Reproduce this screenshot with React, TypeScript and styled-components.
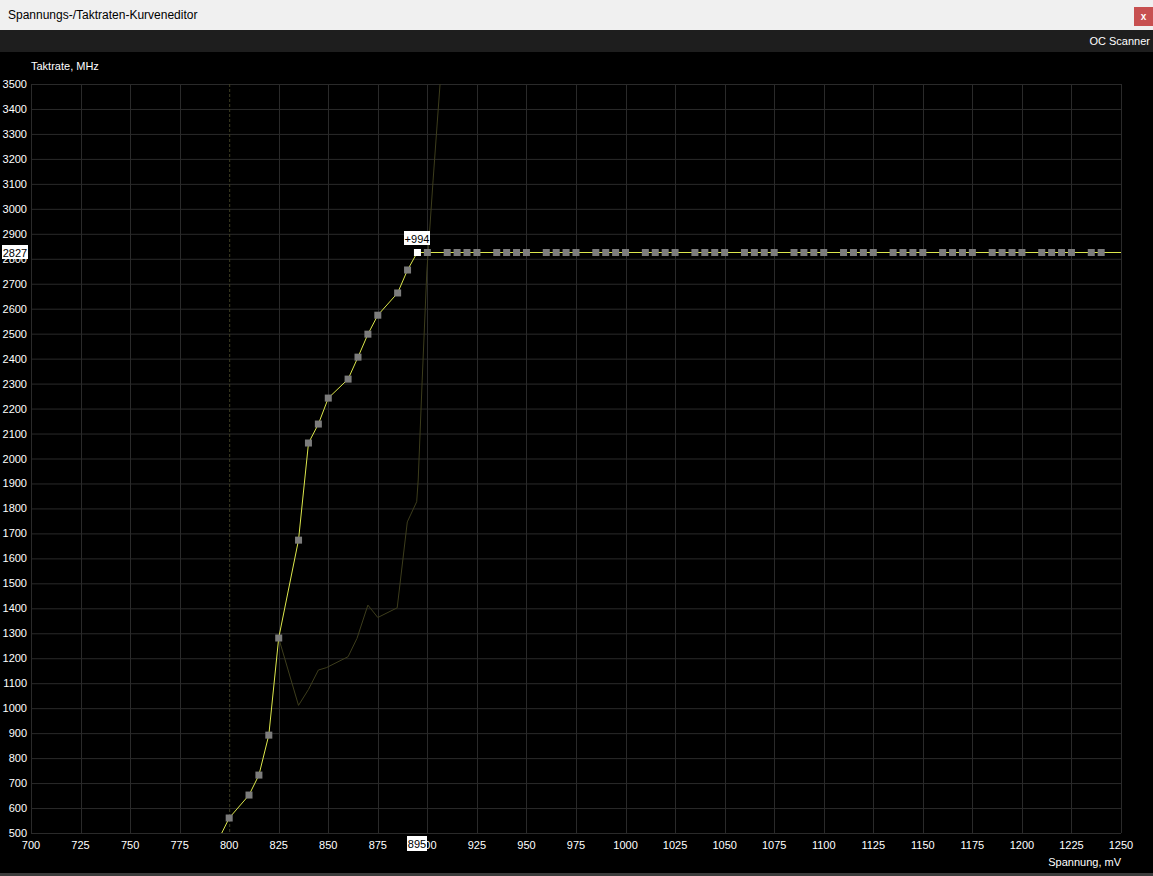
import React from 'react';
import styled, { createGlobalStyle } from 'styled-components';

const GlobalStyle = createGlobalStyle`
  html, body {
    margin: 0;
    padding: 0;
    background: #000;
  }
  body {
    font-family: 'Liberation Sans', Arial, sans-serif;
  }
`;

// plot geometry (chart-local coords)
const W = 1153;
const H = 821;
const X0 = 31;
const X1 = 1121;
const Y0 = 32;
const Y1 = 781;
const MV_MIN = 700;
const MV_MAX = 1250;
const MHZ_MIN = 500;
const MHZ_MAX = 3500;

const sx = (mv: number) => X0 + ((mv - MV_MIN) * (X1 - X0)) / (MV_MAX - MV_MIN);
const sy = (mhz: number) => Y1 - ((mhz - MHZ_MIN) * (Y1 - Y0)) / (MHZ_MAX - MHZ_MIN);

const SELECTED = { mv: 895, mhz: 2827 };

const curve: [number, number][] = [
  [795, 480],
  [800, 560],
  [810, 652],
  [815, 732],
  [820, 892],
  [825, 1281],
  [835, 1673],
  [840, 2062],
  [845, 2138],
  [850, 2242],
  [860, 2318],
  [865, 2406],
  [870, 2498],
  [875, 2574],
  [885, 2663],
  [890, 2755],
  [895, 2827],
];

// flat part: every 5 mV from 900 on, except the x05 steps after each 25
const flatSet: number[] = [];
for (let mv = 900; mv <= 1240; mv += 5) {
  if (mv % 25 !== 5) flatSet.push(mv);
}

const ghost: [number, number][] = [
  [825, 1281],
  [835, 1011],
  [840, 1075],
  [845, 1153],
  [849, 1162],
  [860, 1206],
  [864.5, 1280],
  [870, 1413],
  [875, 1363],
  [884.8, 1402],
  [889.9, 1746],
  [894.6, 1827],
  [895.4, 1914],
  [897.4, 2314],
  [899.7, 2747],
  [902.9, 3115],
  [906.4, 3498],
  [907, 3560],
];

const toPath = (pts: [number, number][]) =>
  pts.map(([mv, mhz], i) => `${i ? 'L' : 'M'}${sx(mv).toFixed(1)} ${sy(mhz).toFixed(1)}`).join(' ');

const yTicks = Array.from({ length: 31 }, (_, i) => 500 + i * 100);
const xTicks = Array.from({ length: 23 }, (_, i) => 700 + i * 25);

const App = () => {
  const selX = sx(SELECTED.mv);
  const selY = Math.round(sy(SELECTED.mhz));
  return (
    <>
      <GlobalStyle />
      <Window>
        <TitleBar>
          <Title>Spannungs-/Taktraten-Kurveneditor</Title>
          <CloseButton>x</CloseButton>
        </TitleBar>
        <Toolbar>
          <ToolbarButton>OC Scanner</ToolbarButton>
        </Toolbar>
        <ChartArea>
          <svg width={W} height={H} viewBox={`0 0 ${W} ${H}`}>
            <defs>
              <clipPath id="plot">
                <rect x={X0} y={Y0} width={X1 - X0} height={Y1 - Y0} />
              </clipPath>
            </defs>

            {yTicks.map((t) => (
              <GridLine key={`h${t}`} x1={X0} x2={X1} y1={sy(t) + 0.5} y2={sy(t) + 0.5} />
            ))}
            {xTicks.map((t) =>
              t === 800 ? (
                <MarkerLine key={`v${t}`} x1={sx(t) + 0.5} x2={sx(t) + 0.5} y1={Y0} y2={Y1} />
              ) : (
                <GridLine key={`v${t}`} x1={Math.round(sx(t)) + 0.5} x2={Math.round(sx(t)) + 0.5} y1={Y0} y2={Y1} />
              )
            )}

            <AxisTitle x={X0} y={18}>Taktrate, MHz</AxisTitle>
            {yTicks.map((t) => (
              <TickLabel key={`yl${t}`} x={27} y={sy(t) + 4} textAnchor="end">
                {t}
              </TickLabel>
            ))}
            {xTicks.map((t) => (
              <TickLabel key={`xl${t}`} x={sx(t)} y={797} textAnchor="middle">
                {t}
              </TickLabel>
            ))}
            <AxisTitle x={X1} y={814} textAnchor="end">Spannung, mV</AxisTitle>

            <g clipPath="url(#plot)">
              <GhostCurve d={toPath(ghost)} />
              <Curve d={toPath(curve)} />
              <Curve d={`M${selX} ${selY + 0.5} L${X1} ${selY + 0.5}`} />
              {curve.slice(1, -1).map(([mv, mhz]) => (
                <Point key={`p${mv}`} x={sx(mv) - 3.5} y={sy(mhz) - 3.5} width={7} height={7} />
              ))}
              {flatSet.map((mv) => (
                <Point key={`f${mv}`} x={sx(mv) - 3.5} y={selY - 3} width={7} height={7} />
              ))}
              <Point $active x={selX - 3.5} y={selY - 3} width={7} height={7} />
            </g>

            <TagBox x={2} y={193} width={26} height={14} />
            <TagText x={15} y={204.5} textAnchor="middle">2827</TagText>

            <TagBox x={404} y={179} width={26} height={14} />
            <TagText x={417} y={190.5} textAnchor="middle">+994</TagText>

            <TagBox x={407} y={784} width={20} height={15} />
            <TagText x={417} y={796} textAnchor="middle">895</TagText>
          </svg>
        </ChartArea>
      </Window>
    </>
  );
};

const Window = styled.div`
  width: 1153px;
  height: 876px;
  display: flex;
  flex-direction: column;
  background: #000;
  overflow: hidden;
`;

const TitleBar = styled.div`
  height: 30px;
  flex: none;
  display: flex;
  align-items: center;
  justify-content: space-between;
  padding-left: 8px;
  background: #f0f0f0;
`;

const Title = styled.span`
  font-size: 12px;
  color: #000;
`;

const CloseButton = styled.div`
  width: 19px;
  height: 19px;
  margin-top: 3px;
  display: flex;
  align-items: center;
  justify-content: center;
  background: #c75050;
  color: #fff;
  font-size: 10px;
  font-weight: bold;
`;

const Toolbar = styled.div`
  height: 22px;
  flex: none;
  display: flex;
  align-items: center;
  justify-content: flex-end;
  padding-right: 3px;
  background: #1e1e1e;
`;

const ToolbarButton = styled.span`
  font-size: 11px;
  color: #fff;
`;

const ChartArea = styled.div`
  height: 821px;
  flex: none;
  border-bottom: 3px solid #3c3c3c;

  svg {
    display: block;
  }
`;

const GridLine = styled.line`
  stroke: #2a2a2a;
  stroke-width: 1;
`;

const MarkerLine = styled.line`
  stroke: #3e3e22;
  stroke-width: 1;
  stroke-dasharray: 3 2;
`;

const TickLabel = styled.text`
  font-family: 'Liberation Sans', Arial, sans-serif;
  font-size: 11px;
  fill: #fff;
`;

const AxisTitle = styled.text`
  font-family: 'Liberation Sans', Arial, sans-serif;
  font-size: 11px;
  fill: #fff;
`;

const Curve = styled.path`
  fill: none;
  stroke: #dde84c;
  stroke-width: 1;
`;

const GhostCurve = styled.path`
  fill: none;
  stroke: #3d3d1c;
  stroke-width: 1;
`;

const Point = styled.rect<{ $active?: boolean }>`
  fill: ${(p) => (p.$active ? '#ffffff' : '#7c7c7c')};
`;

const TagBox = styled.rect`
  fill: #fff;
`;

const TagText = styled.text`
  font-family: 'Liberation Sans', Arial, sans-serif;
  font-size: 11px;
  fill: #000;
`;

export default App;
